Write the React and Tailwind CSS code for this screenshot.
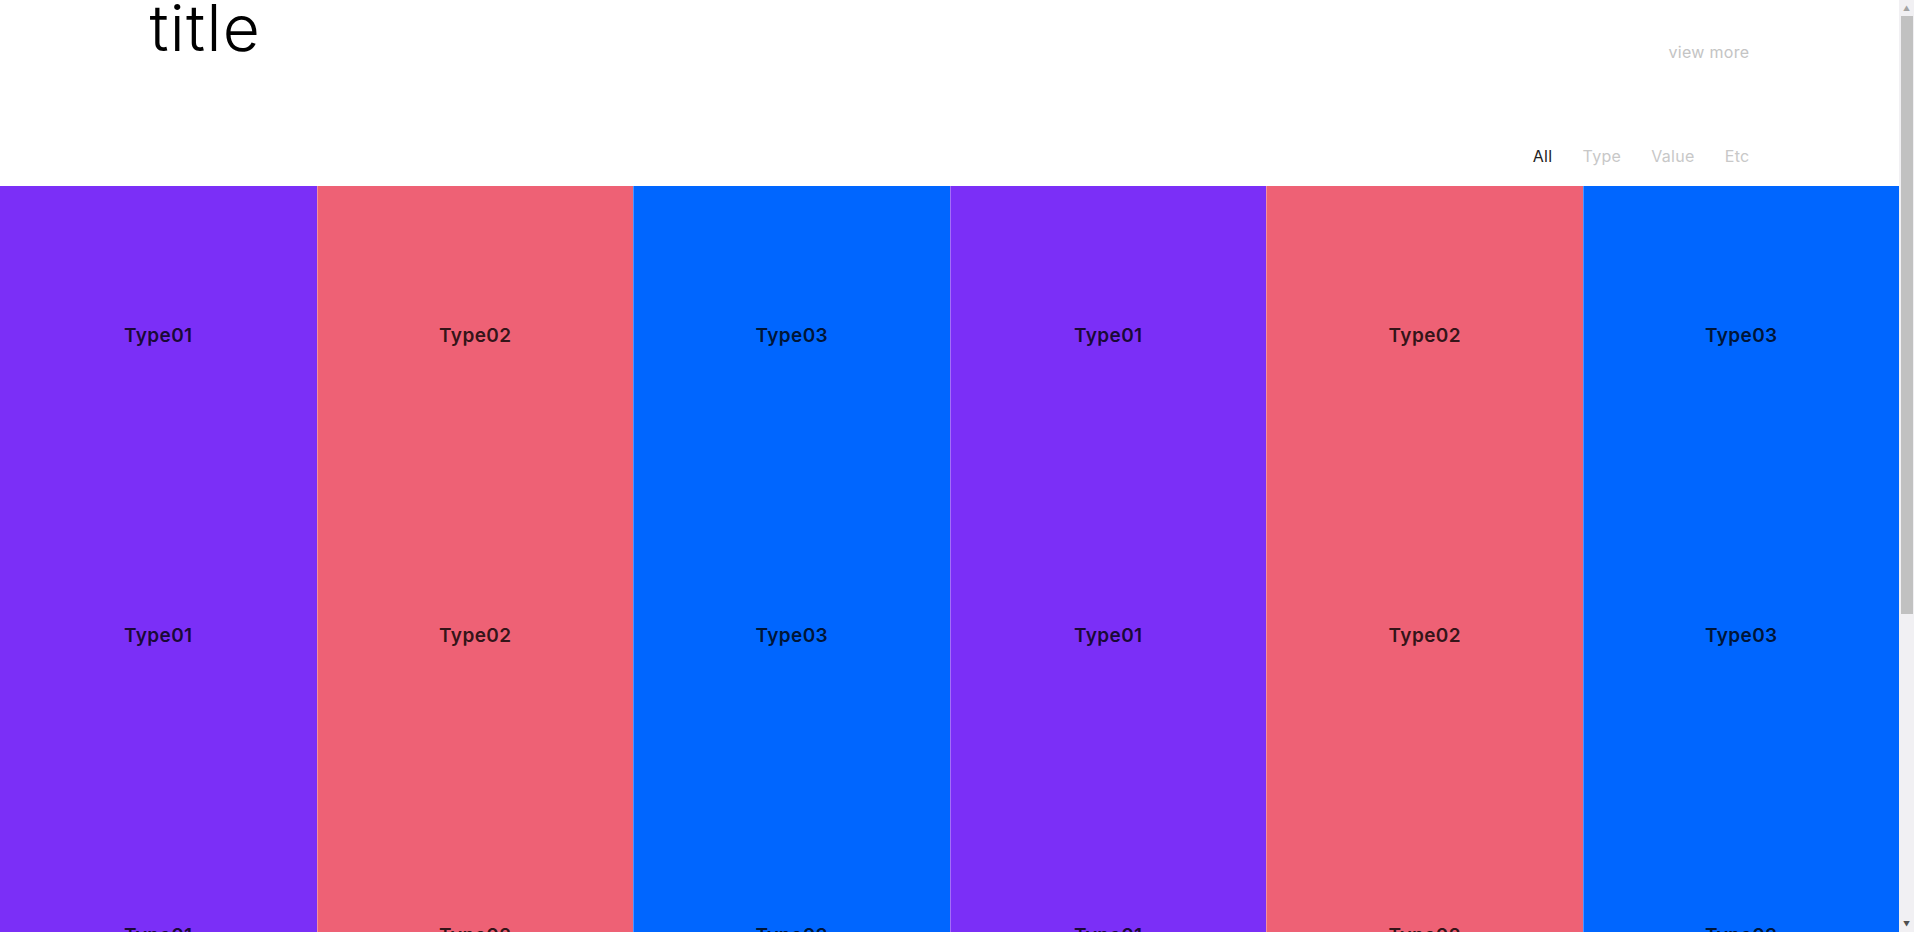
import React from 'react'

const tabs = ["All", "Type", "Value", "Etc"]
const types = [
  { name: "Type01", color: "bg-[#7b2ff7]" },
  { name: "Type02", color: "bg-[#ee6175]" },
  { name: "Type03", color: "bg-[#0066ff]" },
  { name: "Type01", color: "bg-[#7b2ff7]" },
  { name: "Type02", color: "bg-[#ee6175]" },
  { name: "Type03", color: "bg-[#0066ff]" },
]

function App() {
  // 4 rows of the same six cards
  const cards = [...types, ...types, ...types, ...types]

  return (
    <div className='w-full h-screen flex bg-white overflow-hidden' style={{ fontFamily: 'Inter, "Open Sans", sans-serif' }}>
      <div className='flex-1 min-w-0 h-full overflow-hidden'>
        {/* header */}
        <div className='max-w-[1600px] mx-auto h-[186px] flex flex-col'>
          <div className='flex justify-between items-start'>
            <h1 className='text-[64px] font-light leading-[56px] text-black tracking-[0.02em]'>title</h1>
            <a className='mt-[40px] text-[16px] text-[#c4c4c4] tracking-[0.02em] cursor-pointer'>view more</a>
          </div>
          <div className='mt-auto mb-[18px] flex justify-end gap-[30px] text-[16px] tracking-[0.02em]'>
            {tabs.map((tab, i) => (
              <button key={tab} className={i == 0 ? 'text-[#222]' : 'text-[#c8c8c8]'}>{tab}</button>
            ))}
          </div>
        </div>

        {/* type grid */}
        <div className='grid grid-cols-6'>
          {cards.map((card, idx) => (
            <div key={idx} className={`${card.color} h-[300px] flex items-center justify-center border-l border-white/30 [&:nth-child(6n+1)]:border-l-0`}>
              <span className='text-[19px] font-semibold text-black/80 tracking-[0.02em]'>{card.name}</span>
            </div>
          ))}
        </div>
      </div>

      {/* scrollbar */}
      <div className='w-[15px] h-full bg-[#f1f0f3] flex flex-col items-center shrink-0'>
        <div className='h-[16px] flex items-center justify-center text-[7px] text-[#a3a3a3] leading-none'>▲</div>
        <div className='w-[12px] h-[598px] bg-[#c1c1c1]'></div>
        <div className='flex-1'></div>
        <div className='h-[16px] flex items-center justify-center text-[7px] text-[#505050] leading-none'>▼</div>
      </div>
    </div>
  )
}

export default App
